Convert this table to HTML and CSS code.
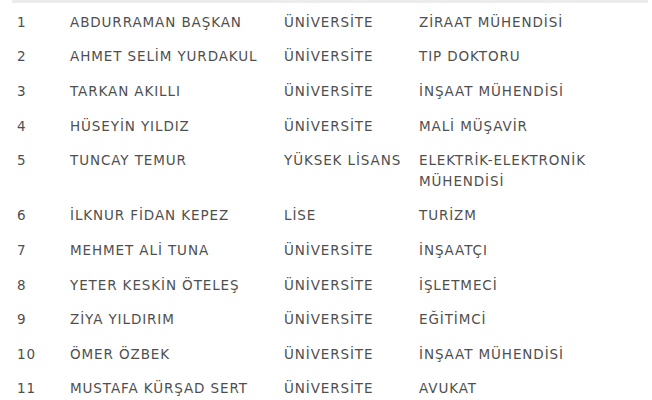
FILE: index.html
```html
<!DOCTYPE html>
<html lang="tr">
<head>
<meta charset="utf-8">
<link rel="stylesheet" href="styles.css">
</head>
<body>
<div class="wrap">
<table class="list">
<colgroup><col class="c1"><col class="c2"><col class="c3"><col class="c4"></colgroup>
<tbody>
<tr><td>1</td><td>ABDURRAMAN BAŞKAN</td><td>ÜNİVERSİTE</td><td>ZİRAAT MÜHENDİSİ</td></tr>
<tr><td>2</td><td>AHMET SELİM YURDAKUL</td><td>ÜNİVERSİTE</td><td>TIP DOKTORU</td></tr>
<tr><td>3</td><td>TARKAN AKILLI</td><td>ÜNİVERSİTE</td><td>İNŞAAT MÜHENDİSİ</td></tr>
<tr><td>4</td><td>HÜSEYİN YILDIZ</td><td>ÜNİVERSİTE</td><td>MALİ MÜŞAVİR</td></tr>
<tr><td>5</td><td>TUNCAY TEMUR</td><td>YÜKSEK LİSANS</td><td>ELEKTRİK-ELEKTRONİK MÜHENDİSİ</td></tr>
<tr><td>6</td><td>İLKNUR FİDAN KEPEZ</td><td>LİSE</td><td>TURİZM</td></tr>
<tr><td>7</td><td>MEHMET ALİ TUNA</td><td>ÜNİVERSİTE</td><td>İNŞAATÇI</td></tr>
<tr><td>8</td><td>YETER KESKİN ÖTELEŞ</td><td>ÜNİVERSİTE</td><td>İŞLETMECİ</td></tr>
<tr><td>9</td><td>ZİYA YILDIRIM</td><td>ÜNİVERSİTE</td><td>EĞİTİMCİ</td></tr>
<tr><td>10</td><td>ÖMER ÖZBEK</td><td>ÜNİVERSİTE</td><td>İNŞAAT MÜHENDİSİ</td></tr>
<tr><td>11</td><td>MUSTAFA KÜRŞAD SERT</td><td>ÜNİVERSİTE</td><td>AVUKAT</td></tr>
</tbody>
</table>
</div>
</body>
</html>
```
FILE: styles.css
```css
html, body {
  margin: 0;
  padding: 0;
  background: #ffffff;
}
.wrap {
  padding: 0 4px 0 12px;
}
.list {
  width: 636px;
  border-collapse: collapse;
  table-layout: fixed;
  border-top: 3px solid #ececec;
  font-family: "DejaVu Sans", sans-serif;
  font-size: 13.5px;
  letter-spacing: 0.9px;
  color: #4f4f4f;
}
.c1 { width: 53px; }
.c2 { width: 214px; }
.c3 { width: 135px; }
.c4 { width: 234px; }
.list td {
  padding: 7px 5px;
  line-height: 20.6px;
  vertical-align: top;
  text-align: left;
}
.list tr:first-child td {
  padding-top: 8.8px;
}
.list td:nth-child(-n+3) {
  white-space: nowrap;
}
```
